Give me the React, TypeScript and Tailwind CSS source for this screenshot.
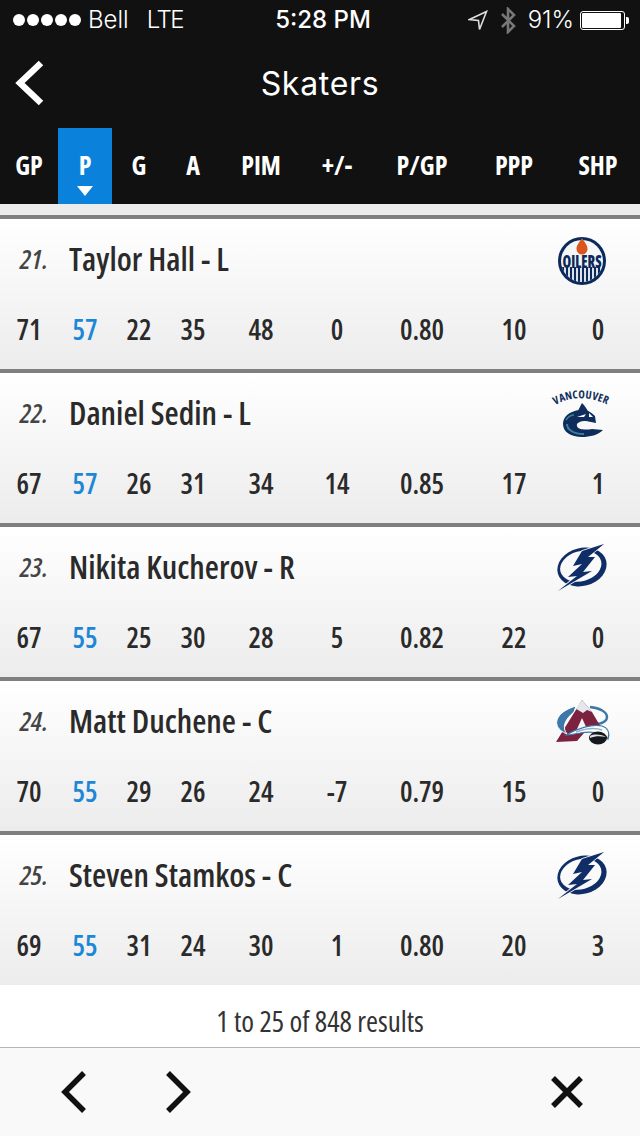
const cols = ["GP", "P", "G", "A", "PIM", "+/-", "P/GP", "PPP", "SHP"];

const players = [
  { rank: "21.", name: "Taylor Hall - L", team: "oilers", stats: ["71", "57", "22", "35", "48", "0", "0.80", "10", "0"] },
  { rank: "22.", name: "Daniel Sedin - L", team: "canucks", stats: ["67", "57", "26", "31", "34", "14", "0.85", "17", "1"] },
  { rank: "23.", name: "Nikita Kucherov - R", team: "lightning", stats: ["67", "55", "25", "30", "28", "5", "0.82", "22", "0"] },
  { rank: "24.", name: "Matt Duchene - C", team: "avalanche", stats: ["70", "55", "29", "26", "24", "-7", "0.79", "15", "0"] },
  { rank: "25.", name: "Steven Stamkos - C", team: "lightning", stats: ["69", "55", "31", "24", "30", "1", "0.80", "20", "3"] },
];

const gridCols = "grid grid-cols-[58px_54px_54px_54px_82px_70px_100px_84px_84px]";
const condensed = "font-['Open_Sans',sans-serif] font-stretch-[75%]";
const semiCondensed = "font-['Open_Sans',sans-serif] font-stretch-[82%]";

function Oilers() {
  return (
    <svg width="90" height="70" viewBox="0 0 90 70">
      <defs>
        <clipPath id="oilersClip">
          <circle cx="42" cy="36" r="21" />
        </clipPath>
      </defs>
      <circle cx="42" cy="36" r="24" fill="#0b2a5b" />
      <circle cx="42" cy="36" r="21" fill="#f4f6f8" />
      <g clipPath="url(#oilersClip)" stroke="#0b2a5b" strokeWidth="2.2">
        <path d="M23 42 V60 M27 42 V60 M31 42 V60 M35 42 V60 M39 42 V60 M43 42 V60 M47 42 V60 M51 42 V60 M55 42 V60 M59 42 V60" />
      </g>
      <path d="M42 13 C39 18 36.5 20 36.5 24 A5.5 5.5 0 0 0 47.5 24 C47.5 20 45 18 42 13Z" fill="#d9561d" />
      <text x="42" y="43" textAnchor="middle" fontSize="17" fontWeight="800" fill="#0b2a5b" textLength="39" lengthAdjust="spacingAndGlyphs" className="font-['Open_Sans',sans-serif] font-stretch-[75%]">
        OILERS
      </text>
    </svg>
  );
}

function Canucks() {
  return (
    <svg width="90" height="70" viewBox="0 -1 90 70">
      <path id="vanArc" d="M15 25 Q41 11 70 26" fill="none" />
      <text fontSize="11" fontWeight="700" fill="#12305e" textLength="54" className="font-['Open_Sans',sans-serif] font-stretch-[75%]">
        <textPath href="#vanArc">VANCOUVER</textPath>
      </text>
      <path d="M42 23 C40 27 38 30 37 33 L49 33 C47 29 45 26 42 23Z" fill="#0f2d5c" />
      <path d="M40 30 C29 31 23 37 23 44 C23 52 31 57 42 57 C50 57 58 55 63 50 L52 49 C46 50 38 50 37 46 C36 43 40 41 46 41 L56 43 L55 36 C50 31 45 29 40 30Z" fill="#0f2d5c" />
      <path d="M27 44 C27 50 34 54 44 54" fill="none" stroke="#3f7f9a" strokeWidth="2" />
      <path d="M26 40 C28 37 31 35 34 35" fill="none" stroke="#3f7f9a" strokeWidth="1.5" />
      <path d="M37 37 L46 34 L44 37Z" fill="#fff" />
      <path d="M49 33 L53 37 L49 37Z" fill="#fff" />
    </svg>
  );
}

function Lightning() {
  return (
    <svg width="90" height="70" viewBox="0 -1 90 70">
      <path
        d="M17 33 a25 19 0 1 0 50 0 a25 19 0 1 0 -50 0Z M20 32 a21 15 0 1 1 42 0 a21 15 0 1 1 -42 0Z"
        fillRule="evenodd"
        fill="#0f2d66"
        transform="rotate(-15 42 33)"
      />
      <path
        d="M64 10 L42 17 L33 32 L42 30 L28 43 L37 42 L18 57 L52 37 L43 38 L55 23 L48 23Z"
        fill="#0f2d66"
        stroke="#f6f6f6"
        strokeWidth="1.6"
        paintOrder="stroke"
      />
    </svg>
  );
}

function Avalanche() {
  return (
    <svg width="90" height="70" viewBox="0 -1 90 70">
      <path d="M50 19 C60 20 67 24 67 29 C67 33 63 35 58 36" fill="none" stroke="#3d78a8" strokeWidth="2.5" />
      <path d="M42 12 L16 54 L37 53 L44 45 L62 41 L52 24Z" fill="#7c2140" />
      <path d="M42 12 L52 24 L47 22 L43 25 L38 22 L36 21Z" fill="#e4e8ec" />
      <path d="M42 30 L47 41 L37 41Z" fill="#f5f5f5" />
      <path d="M36 18 C22 22 15 30 17 37 C18 41 22 44 27 46 C22 40 24 32 34 24Z" fill="#3d78a8" stroke="#fff" strokeWidth="1" />
      <path d="M26 47 C38 40 52 36 62 38 C68 40 70 45 68 51 C62 44 50 43 40 45 C34 46 30 47 26 47Z" fill="#fff" stroke="#3d78a8" strokeWidth="1.2" />
      <path d="M36 44 C44 41 54 39 62 42" fill="none" stroke="#8fb0cb" strokeWidth="1.4" />
      <ellipse cx="58" cy="50" rx="9" ry="6.5" fill="#16181c" />
      <path d="M50 48 C54 46 60 46 66 49 C60 48 55 48 50 50Z" fill="#dfe5ea" />
    </svg>
  );
}

function TeamLogo({ team }: { team: string }) {
  if (team === "oilers") return <Oilers />;
  if (team === "canucks") return <Canucks />;
  if (team === "lightning") return <Lightning />;
  return <Avalanche />;
}

export default function App() {
  return (
    <div className="w-[640px] h-[1136px] overflow-hidden bg-[#ececec] flex flex-col">
      {/* Header */}
      <div className="bg-[#111111] text-white h-[204px] shrink-0 flex flex-col">
        <div className="h-[40px] flex items-center justify-between pl-[13px] pr-[11px] font-['Inter',sans-serif] text-[24px] font-light">
          <div className="flex items-center w-[174px]">
            <div className="flex gap-[2px] mr-[7px]">
              {[0, 1, 2, 3, 4].map((i) => (
                <span key={i} className="w-[12px] h-[12px] rounded-full bg-white" />
              ))}
            </div>
            <span className="mr-[18px]">Bell</span>
            <span className="tracking-[-1.5px]">LTE</span>
          </div>
          <span className="font-medium">5:28 PM</span>
          <div className="flex items-center gap-[12px] w-[170px] justify-end">
            <svg width="20" height="21" viewBox="0 0 20 21" fill="none" stroke="#ddd" strokeWidth="1.6">
              <path d="M18.5 1.5 L1.5 9.5 L10.5 10.5 L11.5 19.5Z" />
            </svg>
            <svg width="16" height="27" viewBox="0 0 16 27" fill="none" stroke="#777" strokeWidth="2.6">
              <path d="M2 7 L14 19 L8 25 V2 L14 8 L2 20" />
            </svg>
            <div className="flex items-center">
              <span className="mr-[6px]">91%</span>
              <div className="w-[45px] h-[19px] border border-white rounded-[3px] p-[1px]">
                <div className="w-[39px] h-full bg-white rounded-[1px]" />
              </div>
              <div className="w-[3px] h-[7px] bg-white rounded-r-[2px] ml-[1px]" />
            </div>
          </div>
        </div>
        <div className="h-[88px] relative flex items-center justify-center">
          <svg className="absolute left-[14px] top-[20px]" width="32" height="46" viewBox="0 0 32 46" fill="none" stroke="#fff" strokeWidth="6.5">
            <path d="M27 3 L6 23 L27 43" />
          </svg>
          <span className="font-['Inter',sans-serif] text-[32px] tracking-[0.7px]">Skaters</span>
        </div>
        <div className={`${gridCols} h-[76px]`}>
          {cols.map((c) => (
            <div
              key={c}
              className={`relative flex items-center justify-center pb-[2px] text-[26px] font-bold ${condensed} ${c === "P" ? "bg-[#0a82dc]" : ""}`}
            >
              {c}
              {c === "P" && (
                <span className="absolute bottom-[8px] left-[19px] w-0 h-0 border-l-[8px] border-r-[8px] border-t-[10px] border-l-transparent border-r-transparent border-t-white" />
              )}
            </div>
          ))}
        </div>
      </div>

      <div className="h-[11px] shrink-0 bg-[#ececec]" />

      {/* Rows */}
      {players.map((p) => (
        <div key={p.rank} className="shrink-0 border-t-4 border-[#7f7f7f] h-[154px] bg-gradient-to-b from-white to-[#ececec]">
          <div className="h-[84px] flex items-center pl-[20px] pb-[4px] relative">
            <span className={`w-[49px] text-[27px] italic font-semibold text-[#444] ${condensed}`}>{p.rank}</span>
            <span className={`text-[32.5px] font-semibold text-[#2a2a2a] ${condensed}`}>{p.name}</span>
            <div className="absolute right-[10px] top-[6px]">
              <TeamLogo team={p.team} />
            </div>
          </div>
          <div className={`${gridCols} h-[54px]`}>
            {p.stats.map((s, i) => (
              <div
                key={i}
                className={`flex items-center justify-center pb-[2px] text-[28px] font-semibold ${semiCondensed} ${i === 1 ? "text-[#1b87d6]" : "text-[#2a2a2a]"}`}
              >
                {s}
              </div>
            ))}
          </div>
        </div>
      ))}

      {/* Footer */}
      <div className={`h-[62px] shrink-0 bg-white flex items-center justify-center pt-[10px] text-[29px] font-medium text-[#333] ${semiCondensed}`}>
        1 to 25 of 848 results
      </div>
      <div className="flex-1 border-t border-[#b5b5b5] bg-[#f9f9f9] relative flex items-center">
        <div className="flex items-center pl-[60px] gap-[76px]">
          <svg width="28" height="42" viewBox="0 0 28 42" fill="none" stroke="#111" strokeWidth="5.5">
            <path d="M24 2 L5 21 L24 40" />
          </svg>
          <svg width="28" height="42" viewBox="0 0 28 42" fill="none" stroke="#111" strokeWidth="5.5">
            <path d="M4 2 L23 21 L4 40" />
          </svg>
        </div>
        <svg className="ml-auto mr-[56px]" width="34" height="34" viewBox="0 0 34 34" fill="none" stroke="#111" strokeWidth="5.5">
          <path d="M3 3 L31 31 M31 3 L3 31" />
        </svg>
      </div>
    </div>
  );
}
